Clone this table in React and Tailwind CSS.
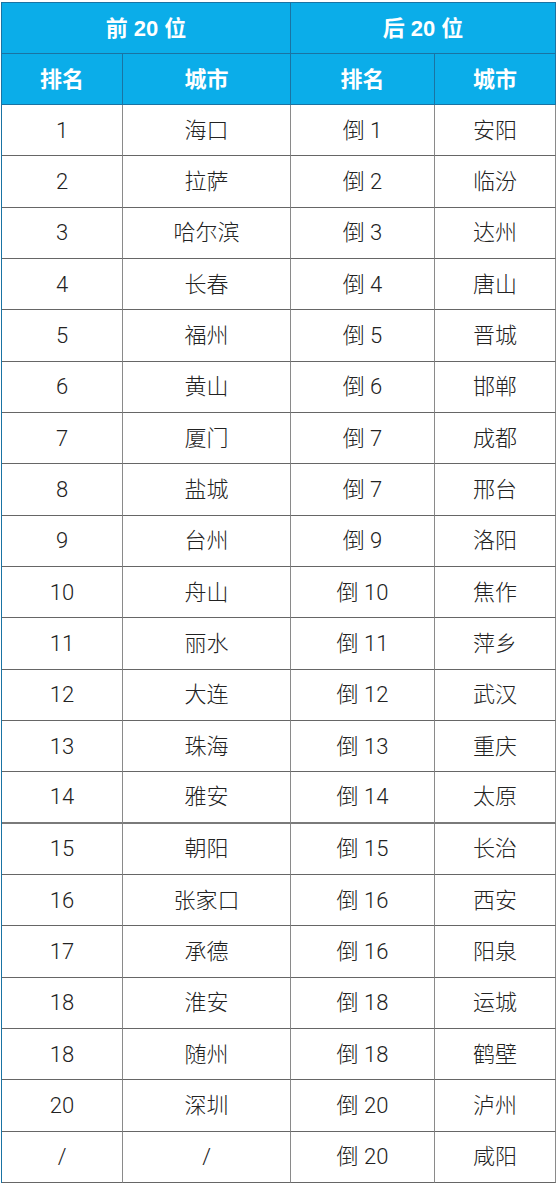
import React from "react";

const rows = [
  ["1", "海口", "倒 1", "安阳"],
  ["2", "拉萨", "倒 2", "临汾"],
  ["3", "哈尔滨", "倒 3", "达州"],
  ["4", "长春", "倒 4", "唐山"],
  ["5", "福州", "倒 5", "晋城"],
  ["6", "黄山", "倒 6", "邯郸"],
  ["7", "厦门", "倒 7", "成都"],
  ["8", "盐城", "倒 7", "邢台"],
  ["9", "台州", "倒 9", "洛阳"],
  ["10", "舟山", "倒 10", "焦作"],
  ["11", "丽水", "倒 11", "萍乡"],
  ["12", "大连", "倒 12", "武汉"],
  ["13", "珠海", "倒 13", "重庆"],
  ["14", "雅安", "倒 14", "太原"],
  ["15", "朝阳", "倒 15", "长治"],
  ["16", "张家口", "倒 16", "西安"],
  ["17", "承德", "倒 16", "阳泉"],
  ["18", "淮安", "倒 18", "运城"],
  ["18", "随州", "倒 18", "鹤壁"],
  ["20", "深圳", "倒 20", "泸州"],
  ["/", "/", "倒 20", "咸阳"],
];

const headFont = { fontFamily: '"Liberation Sans", "Noto Sans CJK SC", sans-serif' };
const bodyFont = { fontFamily: 'Roboto, "Noto Sans CJK SC", sans-serif' };

export default function App() {
  return (
    <div className="bg-white w-[560px] h-[1184px] pt-[2px] pl-[1px]" style={headFont}>
      <div className="w-[555px] border-l border-t border-[#1a73a3]">
        {/* header row 1 */}
        <div className="grid grid-cols-[289px_265px] h-[51px] bg-[#0bade9]">
          <div className="flex items-center justify-center border-r border-b border-[#1a73a3] text-white font-bold text-[22px]">
            前 20 位
          </div>
          <div className="flex items-center justify-center border-r border-b border-[#1a73a3] text-white font-bold text-[22px]">
            后 20 位
          </div>
        </div>
        {/* header row 2 */}
        <div className="grid grid-cols-[121px_168px_144px_121px] h-[51px] bg-[#0bade9]">
          {["排名", "城市", "排名", "城市"].map((t, i) => (
            <div
              key={i}
              className="flex items-center justify-center border-r border-b border-[#1a73a3] text-white font-bold text-[22px]"
            >
              {t}
            </div>
          ))}
        </div>
        {/* body */}
        {rows.map((r, ri) => (
          <div
            key={ri}
            className="grid grid-cols-[121px_168px_144px_121px] h-[51.33px]"
            style={bodyFont}
          >
            {r.map((c, ci) => (
              <div
                key={ci}
                className={
                  "flex items-center justify-center border-r border-[#8a8a8a] text-[22px] font-light text-[#222222] " +
                  (ri === 13 ? "border-b-2 border-b-[#7a7a7a]" : "border-b border-b-[#666666]")
                }
              >
                {c}
              </div>
            ))}
          </div>
        ))}
      </div>
    </div>
  );
}
